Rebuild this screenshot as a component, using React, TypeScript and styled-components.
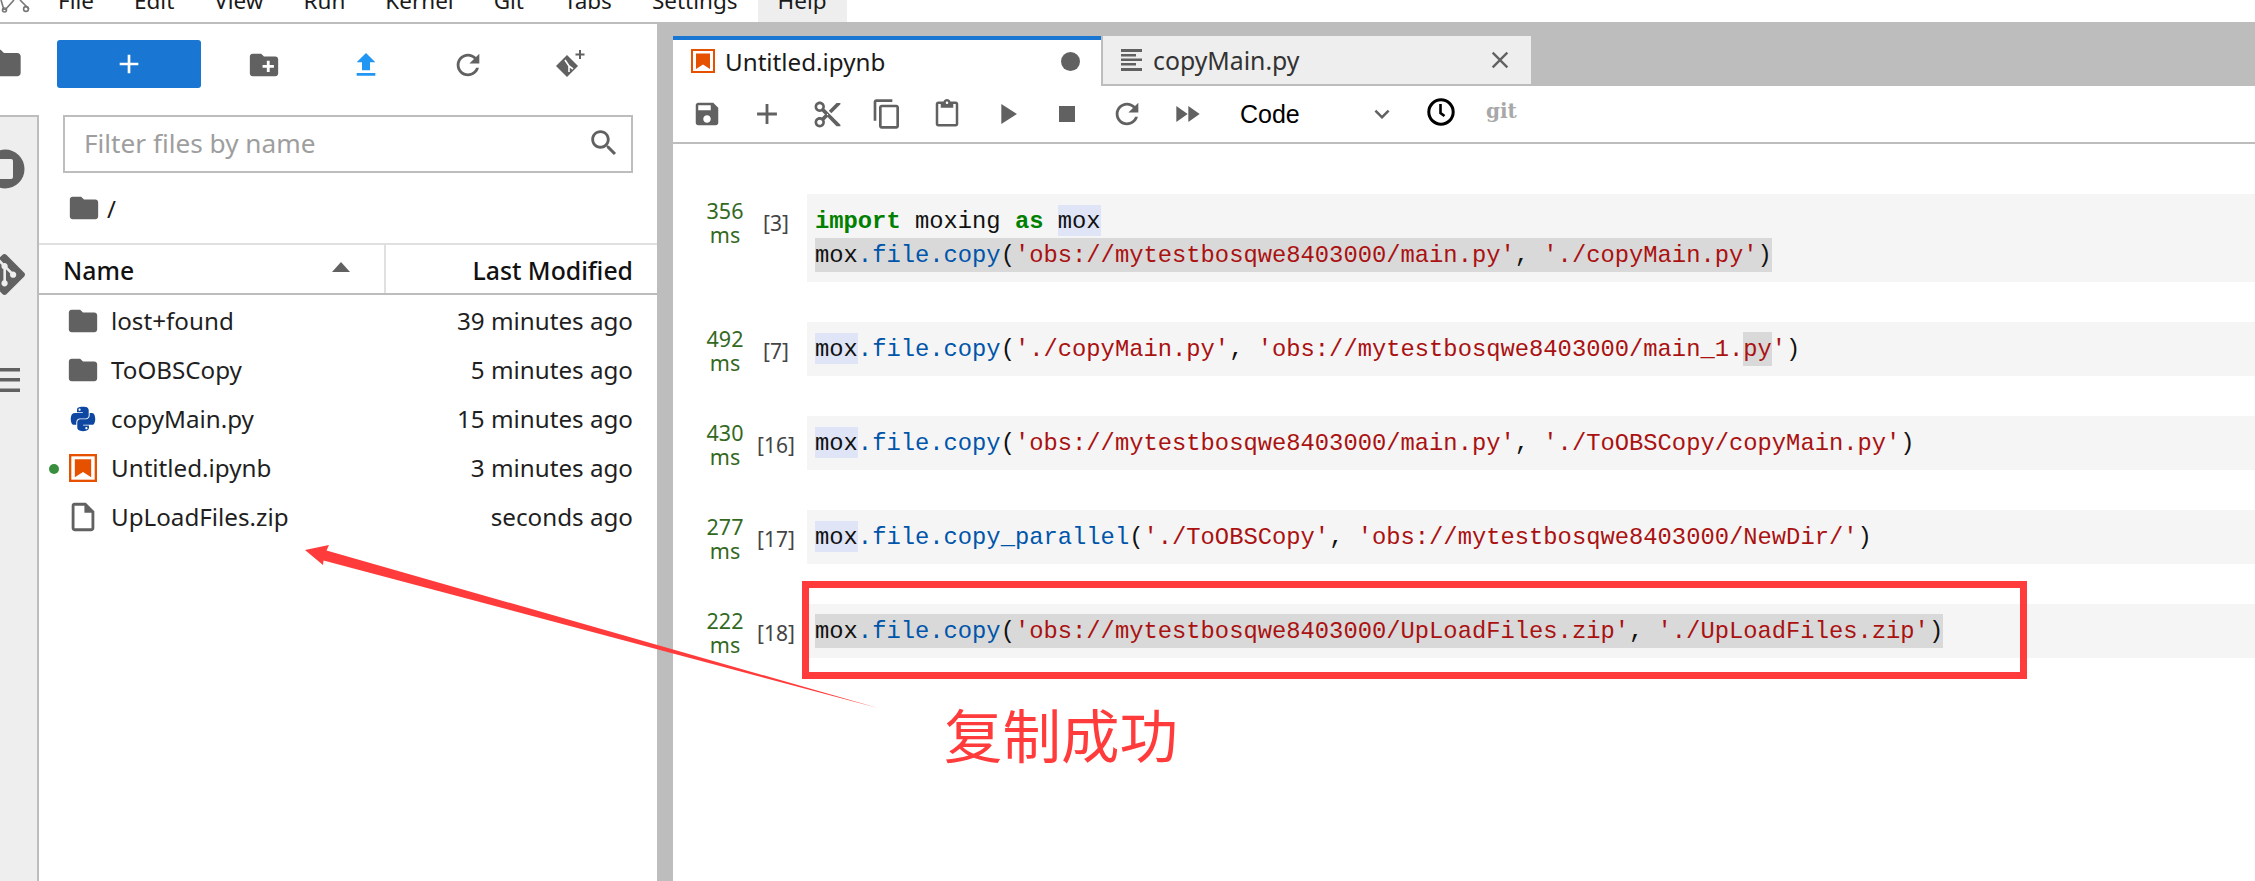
import React from 'react';
import styled, { createGlobalStyle } from 'styled-components';
import { FaPython } from 'react-icons/fa';
import { SiGit } from 'react-icons/si';

const GREY = '#bdbdbd';
const ICON = '#616161';
const RED = '#ff3b3b';
const UI = '"Noto Sans", "Open Sans", sans-serif';

const Global = createGlobalStyle`
  html, body { margin: 0; padding: 0; height: 100%; overflow: hidden; background: #fff; }
  * { box-sizing: border-box; }
  #root { height: 100%; }
`;

const Page = styled.div`
  position: relative;
  width: 100%;
  height: 100%;
  display: flex;
  flex-direction: column;
  overflow: hidden;
  font-family: ${UI};
  color: #1a1a1a;
`;

const MenuBar = styled.nav`
  flex: none;
  height: 24px;
  display: flex;
  padding-left: 38px;
  border-bottom: 2px solid ${GREY};
  overflow: hidden;
  position: relative;
`;

const MenuItem = styled.div<{ $active?: boolean }>`
  height: 22px;
  padding: 0 20px;
  font-size: 22.5px;
  line-height: 0;
  padding-top: 1px;
  white-space: nowrap;
  background: ${(p) => (p.$active ? '#eeeeee' : 'transparent')};
`;

const Logo = styled.svg`
  position: absolute;
  left: 0;
  top: 0;
`;

const Workspace = styled.div`
  flex: 1;
  min-height: 0;
  display: flex;
`;

const Sidebar = styled.aside`
  flex: none;
  width: 39px;
  display: flex;
  flex-direction: column;
  overflow: hidden;
`;

const ActiveRail = styled.div`
  flex: none;
  height: 91px;
  padding-top: 19px;
`;

const Rail = styled.div`
  flex: 1;
  background: #eeeeee;
  border-top: 2px solid ${GREY};
  border-right: 2px solid ${GREY};
`;

const RailTab = styled.div`
  height: 106px;
  display: flex;
  align-items: center;
  &:first-child { height: 104px; }
`;

const Glyph = styled.svg<{ $size: number; $color?: string; $shift?: number }>`
  flex: none;
  display: block;
  width: ${(p) => p.$size}px;
  height: ${(p) => p.$size}px;
  fill: ${(p) => p.$color ?? ICON};
  margin-left: ${(p) => p.$shift ?? 0}px;
`;

const FilePanel = styled.section`
  flex: none;
  width: 618px;
  display: flex;
  flex-direction: column;
`;

const FileToolbar = styled.div`
  flex: none;
  height: 91px;
  padding: 16px 0 0 18px;
  display: flex;
  align-items: flex-start;
`;

const NewButton = styled.div`
  width: 144px;
  height: 48px;
  margin-right: 12px;
  background: #1976d2;
  border-radius: 3px;
  display: flex;
  align-items: center;
  justify-content: center;
`;

const ToolButton = styled.div`
  width: 102px;
  height: 50px;
  display: flex;
  align-items: center;
  justify-content: center;
`;

const FilterBox = styled.div`
  flex: none;
  height: 58px;
  margin: 0 24px;
  padding: 0 10px 2px 19px;
  border: 2px solid ${GREY};
  display: flex;
  align-items: center;
  justify-content: space-between;
  font-size: 26.2px;
  color: #9e9e9e;
`;

const Crumbs = styled.div`
  flex: none;
  height: 70px;
  padding-left: 28px;
  display: flex;
  align-items: center;
  gap: 6px;
  font-size: 24px;
`;

const ListHeader = styled.div`
  flex: none;
  height: 52px;
  display: flex;
  border-top: 2px solid #e0e0e0;
  border-bottom: 2px solid ${GREY};
  font-size: 24.8px;
  font-weight: 500;
  color: #111;
`;

const NameHead = styled.div`
  width: 345px;
  padding: 2px 34px 0 24px;
  display: flex;
  align-items: center;
  justify-content: space-between;
`;

const SortCaret = styled.span`
  width: 0;
  height: 0;
  border-left: 9px solid transparent;
  border-right: 9px solid transparent;
  border-bottom: 10px solid ${ICON};
  margin-top: -6px;
`;

const ModifiedHead = styled.div`
  flex: 1;
  border-left: 2px solid #e0e0e0;
  padding: 2px 24px 0 0;
  display: flex;
  align-items: center;
  justify-content: flex-end;
`;

const FileList = styled.div`
  padding-top: 1px;
`;

const FileRow = styled.div`
  height: 49px;
  display: flex;
  align-items: center;
  padding: 0 24px 0 10px;
  font-size: 24.2px;
  color: #1f1f1f;
`;

const RunDot = styled.span<{ $on?: boolean }>`
  flex: none;
  width: 10px;
  height: 10px;
  border-radius: 50%;
  margin: 2px 10px 0 0;
  background: ${(p) => (p.$on ? '#388e3c' : 'transparent')};
`;

const RowIcon = styled.span`
  flex: none;
  width: 34px;
  height: 34px;
  margin: 0 11px 0 -3px;
  display: flex;
  align-items: center;
  justify-content: center;
`;

const FileName = styled.span`
  flex: 1;
`;

const Gutter = styled.div`
  flex: none;
  width: 16px;
  background: ${GREY};
`;

const Main = styled.main`
  flex: 1;
  min-width: 0;
  display: flex;
  flex-direction: column;
`;

const TabStrip = styled.div`
  flex: none;
  height: 62px;
  padding-top: 12px;
  background: ${GREY};
  display: flex;
  align-items: flex-start;
`;

const Tab = styled.div<{ $active?: boolean }>`
  width: 428px;
  height: ${(p) => (p.$active ? 50 : 48)}px;
  margin-left: ${(p) => (p.$active ? 0 : 2)}px;
  background: ${(p) => (p.$active ? '#fff' : '#eeeeee')};
  border-top: ${(p) => (p.$active ? '4px solid #1976d2' : '0')};
  padding: ${(p) => (p.$active ? '0 21px 4px 18px' : '0 17px 0 18px')};
  display: flex;
  align-items: center;
  gap: 10px;
  font-size: ${(p) => (p.$active ? 24.2 : 24.8)}px;
  color: ${(p) => (p.$active ? '#1a1a1a' : '#333')};
`;

const TabTitle = styled.span`
  flex: 1;
`;

const DirtyDot = styled.span`
  width: 19px;
  height: 19px;
  border-radius: 50%;
  background: ${ICON};
`;

const NotebookBar = styled.div`
  flex: none;
  height: 58px;
  padding-left: 4px;
  border-bottom: 2px solid ${GREY};
  display: flex;
  align-items: center;
`;

const BarButton = styled.div`
  flex: none;
  width: 60px;
  height: 40px;
  display: flex;
  align-items: center;
  justify-content: center;
`;

const CellType = styled.div`
  flex: none;
  width: 194px;
  padding: 0 14px 0 23px;
  display: flex;
  align-items: center;
  justify-content: space-between;
  font-family: "Liberation Sans", sans-serif;
  font-size: 25px;
  color: #000;
`;

const GitLabel = styled.span`
  margin: -6px 0 0 15px;
  font-family: "DejaVu Serif", serif;
  font-weight: 700;
  font-size: 20px;
  color: #a8a8a8;
`;

const Notebook = styled.div`
  flex: 1;
  padding-top: 50px;
  display: flex;
  flex-direction: column;
  gap: 40px;
`;

const Cell = styled.div`
  display: flex;
  align-items: flex-start;
`;

const Timing = styled.div`
  flex: none;
  width: 40px;
  margin-left: 32px;
  padding-top: 5px;
  font-size: 21.5px;
  line-height: 24px;
  text-align: center;
  color: #33691e;
`;

const ExecCount = styled.div`
  flex: none;
  width: 62px;
  padding-top: 15px;
  font-size: 21px;
  line-height: 28px;
  text-align: center;
  color: #444;
`;

const Code = styled.div`
  flex: 1;
  padding: 10px 8px;
  background: #f5f5f5;
  font-family: "Liberation Mono", monospace;
  font-size: 23.8px;
  line-height: 36px;
  white-space: pre;
  color: #111;
`;

const CodeLine = styled.div`
  height: 34px;
`;

const Marked = styled.span<{ $tone: 'blue' | 'grey' }>`
  display: inline-block;
  background: ${(p) => (p.$tone === 'blue' ? '#dfe4f6' : '#d9d9d9')};
  height: ${(p) => (p.$tone === 'blue' ? 31 : 34)}px;
  margin-top: ${(p) => (p.$tone === 'blue' ? 1 : 0)}px;
  line-height: ${(p) => (p.$tone === 'blue' ? 34 : 36)}px;
  vertical-align: top;
`;

const Keyword = styled.b`
  color: #008000;
`;
const Attr = styled.span`
  color: #0055aa;
`;
const Str = styled.span`
  color: #aa1111;
`;

const RedBox = styled.div`
  position: absolute;
  left: 802px;
  top: 581px;
  width: 1225px;
  height: 98px;
  border: 7px solid ${RED};
`;

const Note = styled.div`
  position: absolute;
  left: 944px;
  top: 690px;
  font-family: "Noto Sans CJK SC", sans-serif;
  font-size: 58.5px;
  line-height: 86px;
  color: ${RED};
`;

const ArrowLayer = styled.svg`
  position: absolute;
  left: 0;
  top: 0;
  width: 100%;
  height: 100%;
  pointer-events: none;
`;

const P = {
  folder: 'M10 4H4c-1.1 0-1.99.9-1.99 2L2 18c0 1.1.9 2 2 2h16c1.1 0 2-.9 2-2V8c0-1.1-.9-2-2-2h-8l-2-2z',
  newFolder: 'M20 6h-8l-2-2H4c-1.11 0-1.99.89-1.99 2L2 18c0 1.11.89 2 2 2h16c1.11 0 2-.89 2-2V8c0-1.11-.89-2-2-2zm-1 8h-3v3h-2v-3h-3v-2h3V9h2v3h3v2z',
  upload: 'M9 16h6v-6h4l-7-7-7 7h4zm-4 2h14v2H5z',
  refresh: 'M17.65 6.35C16.2 4.9 14.21 4 12 4c-4.42 0-7.99 3.58-7.99 8s3.57 8 7.99 8c3.73 0 6.84-2.55 7.73-6h-2.08c-.82 2.33-3.04 4-5.65 4-3.31 0-6-2.69-6-6s2.69-6 6-6c1.66 0 3.14.69 4.22 1.78L13 11h7V4l-2.35 2.35z',
  save: 'M17 3H5c-1.11 0-2 .9-2 2v14c0 1.1.89 2 2 2h14c1.1 0 2-.9 2-2V7l-4-4zm-5 16c-1.66 0-3-1.34-3-3s1.34-3 3-3 3 1.34 3 3-1.34 3-3 3zm3-10H5V5h10v4z',
  plus: 'M19 13h-6v6h-2v-6H5v-2h6V5h2v6h6v2z',
  cut: 'M9.64 7.64c.23-.5.36-1.05.36-1.64 0-2.21-1.79-4-4-4S2 3.79 2 6s1.79 4 4 4c.59 0 1.14-.13 1.64-.36L10 12l-2.36 2.36C7.14 14.13 6.59 14 6 14c-2.21 0-4 1.79-4 4s1.79 4 4 4 4-1.79 4-4c0-.59-.13-1.14-.36-1.64L12 14l7 7h3v-1L9.64 7.64zM6 8c-1.1 0-2-.89-2-2s.9-2 2-2 2 .89 2 2-.9 2-2 2zm0 12c-1.1 0-2-.89-2-2s.9-2 2-2 2 .89 2 2-.9 2-2 2zm6-7.5c-.28 0-.5-.22-.5-.5s.22-.5.5-.5.5.22.5.5-.22.5-.5.5zM19 3l-6 6 2 2 7-7V3z',
  copy: 'M16 1H4c-1.1 0-2 .9-2 2v14h2V3h12V1zm3 4H8c-1.1 0-2 .9-2 2v14c0 1.1.9 2 2 2h11c1.1 0 2-.9 2-2V7c0-1.1-.9-2-2-2zm0 16H8V7h11v14z',
  paste: 'M19 2h-4.18C14.4.84 13.3 0 12 0c-1.3 0-2.4.84-2.82 2H5c-1.1 0-2 .9-2 2v16c0 1.1.9 2 2 2h14c1.1 0 2-.9 2-2V4c0-1.1-.9-2-2-2zm-7 0c.55 0 1 .45 1 1s-.45 1-1 1-1-.45-1-1 .45-1 1-1zm7 18H5V4h2v3h10V4h2v16z',
  run: 'M8 5v14l11-7z',
  stop: 'M6 6h12v12H6z',
  ff: 'M4 18l8.5-6L4 6v12zm9-12v12l8.5-6L13 6z',
  chevron: 'M7.41 8.59L12 13.17l4.59-4.58L18 10l-6 6-6-6z',
  search: 'M15.5 14h-.79l-.28-.27C15.41 12.59 16 11.11 16 9.5 16 5.91 13.09 3 9.5 3S3 5.91 3 9.5 5.91 16 9.5 16c1.61 0 3.09-.59 4.23-1.57l.27.28v.79l5 4.99L20.49 19l-4.99-5zm-6 0C7.01 14 5 11.99 5 9.5S7.01 5 9.5 5 14 7.01 14 9.5 11.99 14 9.5 14z',
  file: 'M14 2H6c-1.1 0-1.99.9-1.99 2L4 20c0 1.1.89 2 1.99 2H18c1.1 0 2-.9 2-2V8l-6-6zM6 20V4h7v5h5v11H6z',
  close: 'M19 6.41L17.59 5 12 10.59 6.41 5 5 6.41 10.59 12 5 17.59 6.41 19 12 13.41 17.59 19 19 17.59 13.41 12z',
};

const Icon = ({ d, size, color, shift }: { d: string; size: number; color?: string; shift?: number }) => (
  <Glyph viewBox="0 0 24 24" $size={size} $color={color} $shift={shift}>
    <path d={d} />
  </Glyph>
);

const NotebookIcon = ({ size }: { size: number }) => (
  <svg width={size} height={size} viewBox="0 0 24 24">
    <rect x="1" y="1" width="22" height="22" fill="#fff" stroke="#e65100" strokeWidth="2" />
    <path d="M5 4.5h14V20l-7-4.5L5 20z" fill="#e65100" />
  </svg>
);

const TextIcon = () => (
  <svg width={22} height={22} viewBox="0 0 22 22" fill={ICON}>
    <rect x="0" y="0" width="21" height="3" />
    <rect x="0" y="5" width="15" height="2.5" />
    <rect x="0" y="9.5" width="21" height="2.5" />
    <rect x="0" y="14" width="15" height="2.5" />
    <rect x="0" y="19" width="21" height="3" />
  </svg>
);

const Stop = () => (
  <svg width={40} height={40} viewBox="0 0 40 40" style={{ marginLeft: -15, flex: 'none' }}>
    <circle cx="20" cy="20" r="19.5" fill={ICON} />
    <rect x="8" y="10" width="20" height="20" rx="2" fill="#eeeeee" />
  </svg>
);

const Lines = () => (
  <svg width={20} height={24} viewBox="0 0 20 24" fill={ICON}>
    <rect y="0" width="20" height="3.5" />
    <rect y="10" width="20" height="3.5" />
    <rect y="20.5" width="20" height="3.5" />
  </svg>
);

const files = [
  { name: 'lost+found', time: '39 minutes ago', kind: 'folder' },
  { name: 'ToOBSCopy', time: '5 minutes ago', kind: 'folder' },
  { name: 'copyMain.py', time: '15 minutes ago', kind: 'python' },
  { name: 'Untitled.ipynb', time: '3 minutes ago', kind: 'notebook', running: true },
  { name: 'UpLoadFiles.zip', time: 'seconds ago', kind: 'file' },
];

const menus = ['File', 'Edit', 'View', 'Run', 'Kernel', 'Git', 'Tabs', 'Settings', 'Help'];

const Mox = () => <Marked $tone="blue">mox</Marked>;
const Dot = () => <Attr>.</Attr>;

const App = () => (
  <Page>
    <Global />
    <MenuBar>
      <Logo width="30" height="14" viewBox="0 0 30 14" fill="none" stroke="#777" strokeWidth="1.6">
        <path d="M1 0l3 10M14 0l-9 10M20 0l9 9" />
        <circle cx="4.5" cy="10" r="2" />
        <circle cx="26" cy="9" r="2.4" />
      </Logo>
      {menus.map((m) => (
        <MenuItem key={m} $active={m === 'Help'}>{m}</MenuItem>
      ))}
    </MenuBar>
    <Workspace>
      <Sidebar>
        <ActiveRail>
          <Icon d={P.folder} size={40} shift={-16} />
        </ActiveRail>
        <Rail>
          <RailTab><Stop /></RailTab>
          <RailTab><Glyph as={SiGit} $size={41} $shift={-16} /></RailTab>
          <RailTab><Lines /></RailTab>
        </Rail>
      </Sidebar>
      <FilePanel>
        <FileToolbar>
          <NewButton><Icon d={P.plus} size={32} color="#fff" /></NewButton>
          <ToolButton><Icon d={P.newFolder} size={34} /></ToolButton>
          <ToolButton><Icon d={P.upload} size={32} color="#2196f3" /></ToolButton>
          <ToolButton><Icon d={P.refresh} size={34} /></ToolButton>
          <ToolButton>
            <svg width="30" height="30" viewBox="0 0 30 30">
              <path d="M12 5l11 11-11 11L1 16z" fill={ICON} />
              <path d="M10 10l4 6M14 16v6M14 16l4 3" stroke="#fff" strokeWidth="1.6" fill="none" />
              <path d="M25 0v9M20.5 4.5h9" stroke={ICON} strokeWidth="2" />
            </svg>
          </ToolButton>
        </FileToolbar>
        <FilterBox>
          Filter files by name
          <Icon d={P.search} size={34} />
        </FilterBox>
        <Crumbs>
          <Icon d={P.folder} size={34} />
          /
        </Crumbs>
        <ListHeader>
          <NameHead>Name<SortCaret /></NameHead>
          <ModifiedHead>Last Modified</ModifiedHead>
        </ListHeader>
        <FileList>
          {files.map((f) => (
            <FileRow key={f.name}>
              <RunDot $on={f.running} />
              <RowIcon>
                {f.kind === 'folder' && <Icon d={P.folder} size={34} />}
                {f.kind === 'python' && <FaPython size={28} color="#0d47a1" />}
                {f.kind === 'notebook' && <NotebookIcon size={28} />}
                {f.kind === 'file' && <Icon d={P.file} size={34} />}
              </RowIcon>
              <FileName>{f.name}</FileName>
              {f.time}
            </FileRow>
          ))}
        </FileList>
      </FilePanel>
      <Gutter />
      <Main>
        <TabStrip>
          <Tab $active>
            <NotebookIcon size={24} />
            <TabTitle>Untitled.ipynb</TabTitle>
            <DirtyDot />
          </Tab>
          <Tab>
            <TextIcon />
            <TabTitle>copyMain.py</TabTitle>
            <Icon d={P.close} size={28} />
          </Tab>
        </TabStrip>
        <NotebookBar>
          <BarButton><Icon d={P.save} size={30} /></BarButton>
          <BarButton><Icon d={P.plus} size={34} /></BarButton>
          <BarButton><Icon d={P.cut} size={31} /></BarButton>
          <BarButton><Icon d={P.copy} size={32} /></BarButton>
          <BarButton><Icon d={P.paste} size={30} /></BarButton>
          <BarButton><Icon d={P.run} size={34} /></BarButton>
          <BarButton><Icon d={P.stop} size={32} /></BarButton>
          <BarButton><Icon d={P.refresh} size={34} /></BarButton>
          <BarButton><Icon d={P.ff} size={32} /></BarButton>
          <CellType>Code<Icon d={P.chevron} size={30} /></CellType>
          <BarButton>
            <svg width="28" height="28" viewBox="0 0 28 28" fill="none" stroke="#000" strokeWidth="3" style={{ marginTop: -5 }}>
              <circle cx="14" cy="14" r="12.2" />
              <path d="M13.5 6v9l4 3" strokeWidth="2.6" />
            </svg>
          </BarButton>
          <GitLabel>git</GitLabel>
        </NotebookBar>
        <Notebook>
          <Cell>
            <Timing>356<br />ms</Timing>
            <ExecCount>[3]</ExecCount>
            <Code>
              <CodeLine><Keyword>import</Keyword> moxing <Keyword>as</Keyword> <Mox /></CodeLine>
              <CodeLine><Marked $tone="grey">mox<Dot /><Attr>file</Attr><Dot /><Attr>copy</Attr>(<Str>'obs://mytestbosqwe8403000/main.py'</Str>, <Str>'./copyMain.py'</Str>)</Marked></CodeLine>
            </Code>
          </Cell>
          <Cell>
            <Timing>492<br />ms</Timing>
            <ExecCount>[7]</ExecCount>
            <Code>
              <CodeLine><Mox /><Dot /><Attr>file</Attr><Dot /><Attr>copy</Attr>(<Str>'./copyMain.py'</Str>, <Str>'obs://mytestbosqwe8403000/main_1.</Str><Marked $tone="grey"><Str>py</Str></Marked><Str>'</Str>)</CodeLine>
            </Code>
          </Cell>
          <Cell>
            <Timing>430<br />ms</Timing>
            <ExecCount>[16]</ExecCount>
            <Code>
              <CodeLine><Mox /><Dot /><Attr>file</Attr><Dot /><Attr>copy</Attr>(<Str>'obs://mytestbosqwe8403000/main.py'</Str>, <Str>'./ToOBSCopy/copyMain.py'</Str>)</CodeLine>
            </Code>
          </Cell>
          <Cell>
            <Timing>277<br />ms</Timing>
            <ExecCount>[17]</ExecCount>
            <Code>
              <CodeLine><Mox /><Dot /><Attr>file</Attr><Dot /><Attr>copy_parallel</Attr>(<Str>'./ToOBSCopy'</Str>, <Str>'obs://mytestbosqwe8403000/NewDir/'</Str>)</CodeLine>
            </Code>
          </Cell>
          <Cell>
            <Timing>222<br />ms</Timing>
            <ExecCount>[18]</ExecCount>
            <Code>
              <CodeLine><Marked $tone="grey">mox<Dot /><Attr>file</Attr><Dot /><Attr>copy</Attr>(<Str>'obs://mytestbosqwe8403000/UpLoadFiles.zip'</Str>, <Str>'./UpLoadFiles.zip'</Str>)</Marked></CodeLine>
            </Code>
          </Cell>
        </Notebook>
      </Main>
    </Workspace>
    <ArrowLayer>
      <polygon points="305,550 329,545 326.5,550.5 878,708 323.5,560.5 323,565" fill={RED} />
    </ArrowLayer>
    <RedBox />
    <Note>复制成功</Note>
  </Page>
);

export default App;
